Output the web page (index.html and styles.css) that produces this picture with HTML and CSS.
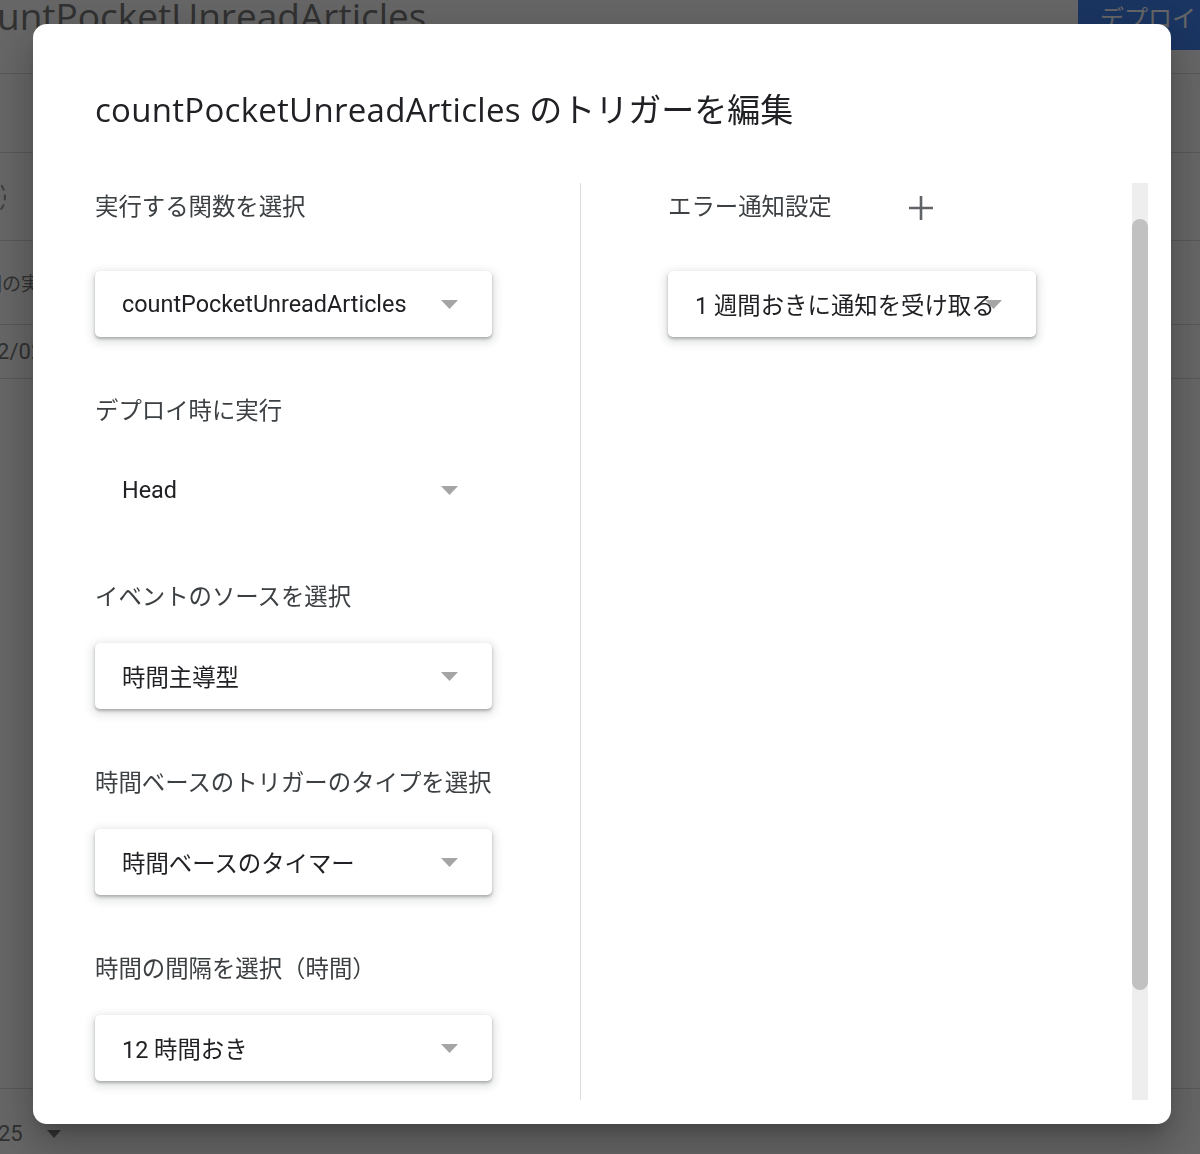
FILE: index.html
```html
<!DOCTYPE html>
<html lang="ja">
<head>
    <meta charset="UTF-8">
    <meta name="viewport" content="width=device-width, initial-scale=1.0">
    <title>トリガーを編集</title>
    <link rel="stylesheet" href="styles.css">
</head>
<body>
    <div class="app">
        <header class="app-header">
            <h1 class="script-name">countPocketUnreadArticles</h1>
            <button class="deploy">デプロイ</button>
        </header>
        <div class="row row-1"></div>
        <div class="row row-2"><span class="spinner"></span></div>
        <div class="row row-3"><span class="cell-text run-label">前回の実行</span></div>
        <div class="row row-4"><span class="cell-text run-date">2022/02/06</span></div>
        <div class="row row-fill"></div>
        <footer class="app-footer">
            <span class="page-size">25</span>
            <span class="page-caret"></span>
        </footer>
    </div>

    <div class="overlay">
        <div class="dialog">
            <h2 class="dialog-title"><span class="fn-name">countPocketUnreadArticles</span> のトリガーを編集</h2>
            <div class="dialog-body">
                <div class="col-left">
                    <div class="field field-first">
                        <div class="field-label">実行する関数を選択</div>
                        <div class="select boxed">
                            <span class="select-text">countPocketUnreadArticles</span>
                            <svg class="caret" width="17" height="9" viewBox="0 0 17 9"><path d="M0 0h17L8.5 9z" fill="#a5a5a5"/></svg>
                        </div>
                    </div>
                    <div class="field">
                        <div class="field-label">デプロイ時に実行</div>
                        <div class="select">
                            <span class="select-text">Head</span>
                            <svg class="caret" width="17" height="9" viewBox="0 0 17 9"><path d="M0 0h17L8.5 9z" fill="#a5a5a5"/></svg>
                        </div>
                    </div>
                    <div class="field">
                        <div class="field-label">イベントのソースを選択</div>
                        <div class="select boxed">
                            <span class="select-text">時間主導型</span>
                            <svg class="caret" width="17" height="9" viewBox="0 0 17 9"><path d="M0 0h17L8.5 9z" fill="#a5a5a5"/></svg>
                        </div>
                    </div>
                    <div class="field">
                        <div class="field-label">時間ベースのトリガーのタイプを選択</div>
                        <div class="select boxed">
                            <span class="select-text">時間ベースのタイマー</span>
                            <svg class="caret" width="17" height="9" viewBox="0 0 17 9"><path d="M0 0h17L8.5 9z" fill="#a5a5a5"/></svg>
                        </div>
                    </div>
                    <div class="field">
                        <div class="field-label">時間の間隔を選択（時間）</div>
                        <div class="select boxed">
                            <span class="select-text">12 時間おき</span>
                            <svg class="caret" width="17" height="9" viewBox="0 0 17 9"><path d="M0 0h17L8.5 9z" fill="#a5a5a5"/></svg>
                        </div>
                    </div>
                </div>
                <div class="col-right">
                    <div class="notify-head">
                        <div class="field-label">エラー通知設定</div>
                        <svg class="plus" width="24" height="24" viewBox="0 0 24 24"><path d="M12 0v24M0 12h24" stroke="#5f6368" stroke-width="2.6"/></svg>
                    </div>
                    <div class="select boxed narrow">
                        <span class="select-text">1 週間おきに通知を受け取る</span>
                        <svg class="caret" width="17" height="9" viewBox="0 0 17 9"><path d="M0 0h17L8.5 9z" fill="#a5a5a5"/></svg>
                    </div>
                </div>
                <div class="scroll-track">
                    <div class="scroll-thumb"></div>
                </div>
            </div>
        </div>
    </div>
</body>
</html>
```

FILE: styles.css
```css
* {
    box-sizing: border-box;
}
body {
    margin: 0;
    height: 1154px;
    overflow: hidden;
    background-color: #fff;
    font-family: Roboto, "Noto Sans CJK JP", sans-serif;
}

/* page behind the dialog */
.app {
    height: 1154px;
    display: flex;
    flex-direction: column;
}
.app-header {
    height: 74px;
    flex-shrink: 0;
    border-bottom: 1px solid #dadce0;
    display: flex;
    justify-content: space-between;
    align-items: flex-start;
    overflow: hidden;
}
.script-name {
    margin: -10px 0 0 -43px;
    font: 400 37px/52px "Open Sans", sans-serif;
    color: #7a7a7a;
    white-space: nowrap;
}
.deploy {
    width: 122px;
    height: 50px;
    border: none;
    background-color: #4285f4;
    color: #fff;
    font: 24px/24px "Noto Sans CJK JP", sans-serif;
    text-align: left;
    padding: 0 0 16px 22px;
    white-space: nowrap;
    overflow: hidden;
}
.row {
    flex-shrink: 0;
    border-bottom: 1px solid #dadce0;
    display: flex;
    align-items: center;
}
.row-1 {
    height: 79px;
}
.row-2 {
    height: 88px;
}
.row-3 {
    height: 84px;
}
.row-4 {
    height: 54px;
}
.row-fill {
    flex: 1;
}
.spinner {
    width: 44px;
    height: 44px;
    margin-left: -38px;
    border: 2px dashed #9a9a9a;
    border-radius: 50%;
}
.cell-text {
    color: #7a7a7a;
    white-space: nowrap;
}
.run-label {
    font-size: 19px;
    margin-left: -36px;
}
.run-date {
    font-size: 22px;
    margin-left: -40px;
}
.app-footer {
    height: 65px;
    flex-shrink: 0;
    display: flex;
    align-items: center;
    padding-top: 24px;
    gap: 24px;
}
.page-size {
    font-size: 22px;
    color: #7a7a7a;
    margin-left: -2px;
}
.page-caret {
    width: 0;
    height: 0;
    border-left: 7px solid transparent;
    border-right: 7px solid transparent;
    border-top: 8px solid #7a7a7a;
}

/* dialog */
.overlay {
    position: fixed;
    inset: 0;
    background-color: rgba(0, 0, 0, 0.6);
    padding: 24px 0 0 33px;
}
.dialog {
    width: 1138px;
    height: 1100px;
    background-color: #fff;
    border-radius: 14px;
    padding: 64px 23px 24px 62px;
    display: flex;
    flex-direction: column;
    box-shadow: 0 11px 15px -7px rgba(0, 0, 0, 0.2), 0 24px 38px 3px rgba(0, 0, 0, 0.14), 0 9px 46px 8px rgba(0, 0, 0, 0.12);
}
.dialog-title {
    margin: 0 0 51px 0;
    font: 400 33px/44px "Open Sans", "Noto Sans CJK JP", sans-serif;
    color: #202124;
    white-space: nowrap;
}
.fn-name {
    letter-spacing: 0.28px;
}
.dialog-body {
    flex: 1;
    min-height: 0;
    display: flex;
}
.col-left {
    width: 485px;
    padding-top: 8px;
}
.col-right {
    flex: 1;
    border-left: 1px solid #dadce0;
    padding: 8px 0 0 87px;
}
.field {
    margin-bottom: 58px;
}
.field:last-child {
    margin-bottom: 0;
}
.field-label {
    font-size: 23.4px;
    line-height: 32px;
    color: #3c4043;
    margin-bottom: 30px;
    white-space: nowrap;
}
.field-first .field-label {
    margin-bottom: 48px;
}
.select {
    position: relative;
    width: 397px;
    height: 66px;
    display: flex;
    align-items: center;
    padding-left: 27px;
}
.select.boxed {
    background-color: #fff;
    border-radius: 5px;
    box-shadow: 0 2px 3px rgba(60, 64, 67, 0.35), 0 3px 9px 3px rgba(60, 64, 67, 0.14);
}
.select.narrow {
    width: 368px;
}
.select-text {
    position: relative;
    z-index: 1;
    font-size: 23.4px;
    color: #202124;
    white-space: nowrap;
}
.caret {
    position: absolute;
    right: 34px;
    top: 29px;
}
.notify-head {
    display: flex;
    align-items: flex-start;
    margin-bottom: 48px;
}
.notify-head .field-label {
    margin-bottom: 0;
}
.plus {
    margin: 5px 0 0 77px;
}
.scroll-track {
    width: 16px;
    background-color: #eeeeee;
    padding-top: 36px;
}
.scroll-thumb {
    height: 771px;
    background-color: #c1c1c1;
    border-radius: 8px;
}
```
